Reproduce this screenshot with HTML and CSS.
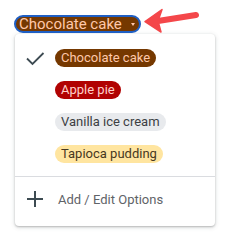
FILE: index.html
```html
<!DOCTYPE html>
<html lang="en">
<head>
<meta charset="utf-8">
<title>Dropdown chips</title>
<link rel="stylesheet" href="styles.css">
</head>
<body>
<div class="page">
  <div class="trigger">
    <span class="trigger-label">Chocolate cake</span>
    <span class="caret"></span>
  </div>
  <div class="menu">
    <ul class="options">
      <li class="option">
        <svg class="check" width="22" height="22" viewBox="0 0 22 22"><polyline points="3,11.5 8.5,17 19.5,6"/></svg>
        <span class="chip chip-brown">Chocolate cake</span>
      </li>
      <li class="option">
        <span class="check-space"></span>
        <span class="chip chip-red">Apple pie</span>
      </li>
      <li class="option">
        <span class="check-space"></span>
        <span class="chip chip-grey">Vanilla ice cream</span>
      </li>
      <li class="option">
        <span class="check-space"></span>
        <span class="chip chip-yellow">Tapioca pudding</span>
      </li>
    </ul>
    <div class="divider"></div>
    <div class="add-row">
      <svg class="plus" width="16" height="16" viewBox="0 0 16 16"><path d="M8 0v16M0 8h16"/></svg>
      <span class="add-label">Add / Edit Options</span>
    </div>
  </div>
  <svg class="pointer" width="65" height="35" viewBox="0 0 65 35">
    <line x1="18" y1="16" x2="56" y2="10"/>
    <polygon points="5,16.5 22,4.5 18,16 21,27"/>
  </svg>
</div>
</body>
</html>
```
FILE: styles.css
```css
* { box-sizing: border-box; }
body {
  margin: 0;
  background: #ffffff;
  font-family: Roboto, "Liberation Sans", Arial, sans-serif;
}
.page {
  position: relative;
  padding: 14px 0 0 14px;
  width: 230px;
  height: 240px;
}
.trigger {
  display: inline-flex;
  align-items: center;
  height: 18px;
  border: 2px solid #1f5fc4;
  border-radius: 9px;
  background: #753800;
  color: #ffc8aa;
  font-size: 15px;
  line-height: 14px;
  padding: 0 4px 0 3px;
  gap: 9px;
}
.caret {
  width: 0;
  height: 0;
  border-left: 2.5px solid transparent;
  border-right: 2.5px solid transparent;
  border-top: 3px solid #ffc8aa;
  margin-top: 1px;
}
.menu {
  margin: 1px 0 0 1px;
  width: 200px;
  padding: 8px 0 5px 0;
  background: #ffffff;
  border-radius: 4px;
  box-shadow: 0 1px 2px rgba(60, 64, 67, 0.3), 0 1px 4px 1px rgba(60, 64, 67, 0.12);
}
.options {
  list-style: none;
  margin: 0;
  padding: 0;
}
.option {
  display: flex;
  align-items: center;
  height: 32px;
  padding-left: 9px;
  gap: 9px;
}
.check {
  fill: none;
  stroke: #3d4b52;
  stroke-width: 1.8;
  flex: none;
}
.check-space {
  width: 22px;
  flex: none;
}
.chip {
  display: inline-block;
  height: 18px;
  line-height: 18px;
  padding: 0 6px;
  border-radius: 9px;
  font-size: 13px;
  white-space: nowrap;
}
.chip-brown { background: #753800; color: #ffc8aa; }
.chip-red { background: #b10202; color: #ffcfc9; }
.chip-grey { background: #e8eaed; color: #3c4043; }
.chip-yellow { background: #ffe5a0; color: #473821; }
.divider {
  height: 1px;
  margin-top: 6px;
  background: #dadce0;
}
.add-row {
  display: flex;
  align-items: center;
  height: 44px;
  padding-left: 12px;
  gap: 15px;
}
.plus {
  stroke: #3d4b52;
  stroke-width: 2;
  flex: none;
}
.add-label {
  font-size: 13px;
  color: #5f6368;
}
.pointer {
  position: absolute;
  left: 140px;
  top: 5px;
}
.pointer line {
  stroke: #f4474a;
  stroke-width: 6;
  stroke-linecap: round;
}
.pointer polygon {
  fill: #f4474a;
  stroke: #f4474a;
  stroke-width: 1.5;
  stroke-linejoin: round;
}
```
